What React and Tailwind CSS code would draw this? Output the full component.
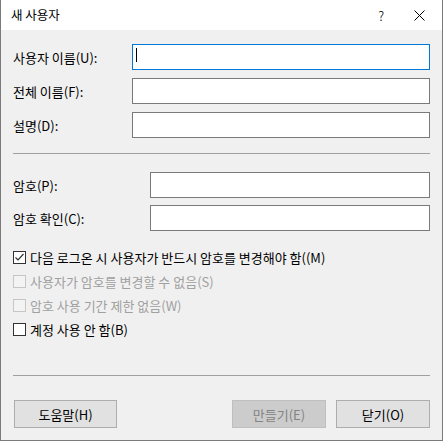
const font = { fontFamily: '"Noto Sans CJK KR", "Noto Sans", sans-serif' };

function TextRow({ label, inputLeft, focused, cursor }) {
  return (
    <div className="flex h-[26px] items-center">
      <span className="whitespace-nowrap" style={{ width: inputLeft - 13 }}>{label}</span>
      <div
        className={`relative h-[26px] flex-1 bg-white border ${focused ? 'border-[#0078d7]' : 'border-[#7a7a7a]'}`}
      >
        {cursor && <div className="absolute left-[3px] top-[3px] h-[14px] w-px bg-black" />}
      </div>
    </div>
  );
}

function CheckRow({ label, checked, disabled }) {
  return (
    <div className="flex h-[24px] items-center gap-[4px]">
      <div
        className={`flex h-[13px] w-[13px] items-center justify-center border ${
          disabled ? 'border-[#c6c6c6] bg-[#f3f3f3]' : 'border-[#333333] bg-white'
        }`}
      >
        {checked && (
          <svg width="11" height="11" viewBox="0 0 11 11" fill="none">
            <path d="M1.5 5.5l2.5 2.5 5.5-6" stroke="#333" strokeWidth="1.2" />
          </svg>
        )}
      </div>
      <span className={`whitespace-nowrap ${disabled ? 'text-[#a0a0a0]' : 'text-black'}`}>{label}</span>
    </div>
  );
}

function Button({ children, disabled, className = '' }) {
  return (
    <div
      className={`flex h-[28px] items-center justify-center border ${
        disabled ? 'border-[#bfbfbf] bg-[#cccccc] text-[#838383]' : 'border-[#adadad] bg-[#e1e1e1] text-black'
      } ${className}`}
    >
      {children}
    </div>
  );
}

export default function App() {
  return (
    <div
      className="flex h-[441px] w-[443px] flex-col border-x border-b border-[#7a7a7a] bg-[#f0f0f0] text-[13px] leading-none text-black"
      style={font}
    >
      {/* 제목 표시줄 */}
      <div className="flex h-[30px] items-center bg-white pl-[10px]">
        <span className="text-[12.5px]">새 사용자</span>
        <span className="ml-auto mr-[30px] text-[13px] font-light">?</span>
        <svg className="mr-[17px]" width="11" height="11" viewBox="0 0 11 11">
          <path d="M0.5 0.5l10 10M10.5 0.5l-10 10" stroke="#000" strokeWidth="1" />
        </svg>
      </div>

      <div className="flex flex-col pl-[12px] pr-[12px]">
        <div className="mt-[14px] flex flex-col gap-[8px]">
          <TextRow label="사용자 이름(U):" inputLeft={132} focused cursor />
          <TextRow label="전체 이름(F):" inputLeft={132} />
          <TextRow label="설명(D):" inputLeft={132} />
        </div>

        <div className="mt-[15px] h-px bg-[#a0a0a0]" />

        <div className="mt-[18px] flex flex-col gap-[7px]">
          <TextRow label="암호(P):" inputLeft={150} />
          <TextRow label="암호 확인(C):" inputLeft={150} />
        </div>

        <div className="mt-[14px] flex flex-col">
          <CheckRow label="다음 로그온 시 사용자가 반드시 암호를 변경해야 함((M)" checked />
          <CheckRow label="사용자가 암호를 변경할 수 없음(S)" disabled />
          <CheckRow label="암호 사용 기간 제한 없음(W)" disabled />
          <CheckRow label="계정 사용 안 함(B)" />
        </div>

        <div className="mt-[34px] h-px bg-[#a0a0a0]" />

        <div className="mt-[24px] flex pl-px">
          <Button className="w-[103px]">도움말(H)</Button>
          <Button className="ml-auto w-[94px]" disabled>만들기(E)</Button>
          <Button className="ml-[10px] w-[94px]">닫기(O)</Button>
        </div>
      </div>
    </div>
  );
}
